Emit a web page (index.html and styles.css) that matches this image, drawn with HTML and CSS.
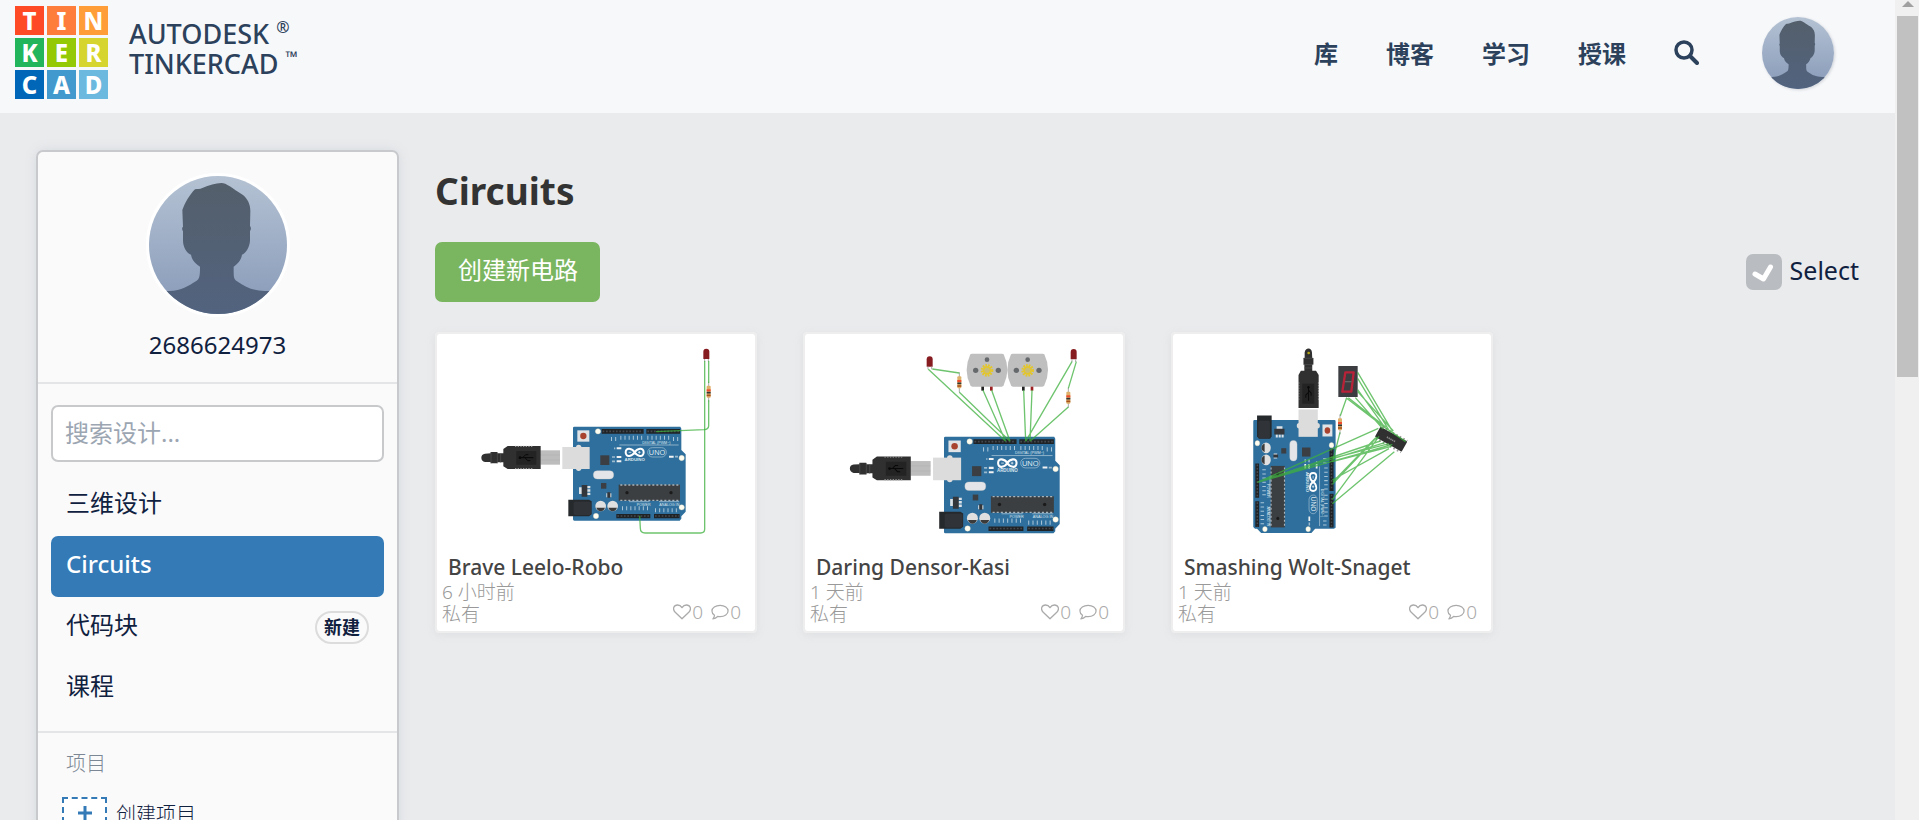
FILE: index.html
```html
<!DOCTYPE html>
<html lang="zh-CN">
<head>
<meta charset="utf-8">
<title>Tinkercad</title>
<link rel="stylesheet" href="styles.css">
</head>
<body>
<svg class="defs" aria-hidden="true">
  <defs>
    <linearGradient id="sky" x1="0" y1="0" x2="0" y2="1"><stop offset="0" stop-color="#b4c2d3"/><stop offset="1" stop-color="#8799b8"/></linearGradient>
    <linearGradient id="person" x1="0" y1="0" x2="0" y2="1"><stop offset="0" stop-color="#545f6b"/><stop offset="1" stop-color="#52637f"/></linearGradient>
    <symbol id="avatar" viewBox="387 108 414 414">
      <rect x="387" y="108" width="414" height="414" fill="url(#sky)"/>
      <path fill="url(#person)" d="M387 453h60c40-2 55-14 83-31 8-6 10-12 10-42-10-8-24-16-27-36-12-4-24-22-24-42v-28c-4-6-3-12 0-14l-2-50c8-22 22-46 38-62 8-2 14 0 22-4 20-8 40-15 57-15 16 0 30 14 66 37 14 12 22 30 21 50l-1 42c4 4 3 12 0 14v30c-1 18-12 38-24 42-3 18-14 28-25 36 0 34 0 36 10 44 26 18 45 27 82 29h68v69H387z"/>
    </symbol>
    <symbol id="heart" viewBox="0 0 18 16"><path d="M9 14.8 2.2 8.2C-1 4.800 1 1 4.600 1 6.800 1 8.200 2.400 9 3.600 9.800 2.400 11.200 1 13.400 1 17 1 19 4.800 15.800 8.200z" fill="none" stroke="currentColor" stroke-width="1.300" stroke-linejoin="round"/></symbol>
    <symbol id="bubble" viewBox="0 0 19 16"><path d="M9.600 1C14.500 1 18 3.700 18 7s-3.500 6-8.400 6c-1 0-1.800-.1-2.600-.3C5.700 14 4 15 2 15.300c1-1 1.600-2.300 1.700-3.800C2 10.400 1 8.800 1 7c0-3.300 3.700-6 8.600-6z" fill="none" stroke="currentColor" stroke-width="1.300" stroke-linejoin="round"/></symbol>

    <g id="plug">
      <path fill="#303030" d="M180 386q-11 2-11 12t11 13h17v4h20v-3h18v12l13 8h99v-69h-99l-13 9v13h-18v-4h-20v4z"/>
      <path d="M198 382v33M217 382v33M227 386v27" stroke="#555" stroke-width="2"/>
      <path d="M270 364h56M270 431h56" stroke="#aaa" stroke-width="3" stroke-dasharray="4 4"/>
      <rect x="274" y="378" width="60" height="41" fill="#232323"/>
      <path d="M283 398h42M293 398l9-9h8M300 398l8 9h8" stroke="#090909" stroke-width="3" fill="none"/>
      <circle cx="285" cy="398" r="4" fill="#090909"/>
    </g>
    <g id="board">
      <path fill="#2f6f9d" d="M444 309q0-4 4-4h318l3 6v64l13 13v172l-13 14v7l-5 6H448q-4 0-4-4z"/>
      <rect x="457" y="316" width="36" height="34" fill="#dfe3e6"/><circle cx="475" cy="333" r="9.500" fill="#a8432f"/>
      <circle cx="461" cy="367" r="8" fill="#ddd"/><circle cx="461" cy="430" r="8" fill="#ddd"/>
      <rect x="412" y="366" width="82" height="66" fill="#dcdcdc"/>
      <rect x="526" y="391" width="27" height="29" fill="#3b3e42"/>
      <rect x="505" y="437" width="61" height="25" rx="12" fill="#e3e5e8" stroke="#c8c8c8"/>
      <rect x="528" y="474" width="16" height="17" fill="#3b3e42"/>
      <path d="M462 487h9v20h-9zM486 483h10v7h-10zM486 493h10v7h-10zM486 503h10v7h-10zM544 505h4v12h-4zM555 505h4v12h-4z" fill="#dce3e8"/>
      <path d="M470 480h17v35h-17zM547 502h9v16h-9z" fill="#33363a"/>
      <path d="M430 524h62l8 5v39l-8 6h-62z" fill="#26292c"/><rect x="446" y="530" width="52" height="40" rx="5" fill="#303438"/>
      <circle cx="527" cy="543" r="16" fill="#e0e0e0"/><path d="M514 548h26q-4 11-13 11t-13-11z" fill="#3b3b3b"/>
      <circle cx="563" cy="543" r="16" fill="#e0e0e0"/><path d="M550 548h26q-4 11-13 11t-13-11z" fill="#3b3b3b"/>
      <path d="M530 312h126v14H530zM664 312h101v14H664zM574 567h102v13H574zM687 567h77v13h-77z" fill="#202326"/>
      <path d="M533 319h120M667 319h96M577 573h96M690 573h72" stroke="#45494d" stroke-width="5" stroke-dasharray="5 5"/>
      <rect x="581" y="479" width="184" height="48" fill="#3c3f42"/>
      <path d="M586 480h176M586 526h176" stroke="#a9b4bb" stroke-width="4" stroke-dasharray="6 6"/>
      <circle cx="606" cy="503" r="5" fill="#1b1b1b"/><circle cx="738" cy="503" r="5" fill="#1b1b1b"/>
      <g fill="#fffdf0" stroke="#d8d4bc"><circle cx="519" cy="319" r="8"/><circle cx="770" cy="399" r="8"/><circle cx="770" cy="547" r="8"/><circle cx="513" cy="573" r="8"/></g>
      <path d="M558 342h24M586 338h68M667 338h68M744 342h18M591 550h84M690 556h72" stroke="#a9c5d7" stroke-width="12" stroke-dasharray="3 9.500"/>
      <path d="M583 360h178M612 530h62M702 530h60" stroke="#b9d0de" stroke-width="2"/>
      <path d="M575 370h14M575 396h14M575 409h14M732 395h14" stroke="#f0f2f3" stroke-width="6"/>
      <path d="M561 396h9M561 409h9M567 370h4M750 395h9" stroke="#9dbbcf" stroke-width="5"/>
      <path d="M629 382c-7-12-27-17-27 0s20 12 27 0 27-17 27 0-20 12-27 0z" fill="none" stroke="#fff" stroke-width="6"/>
      <path d="M611 382h8M639 382h8M643 378v8" stroke="#fff" stroke-width="2"/>
      <rect x="668" y="368" width="56" height="28" rx="14" fill="none" stroke="#a9c5d7" stroke-width="2"/>
    </g>
    <g id="labels" class="silk">
      <text x="629" y="409" font-size="13" font-weight="700" text-anchor="middle">ARDUINO</text>
      <text x="696" y="390" font-size="22" text-anchor="middle">UNO</text>
      <text x="694" y="356" font-size="11" text-anchor="middle">DIGITAL (PWM~)</text>
      <text x="656" y="542" font-size="11" text-anchor="middle">POWER</text>
      <text x="733" y="542" font-size="11" text-anchor="middle">ANALOG IN</text>
    </g>
    <g id="led"><path d="M-9 31V9q0-9 9-9t9 9v22z" fill="#861b20"/><path d="M-5 31v8M6 31v8" stroke="#aaa" stroke-width="3"/></g>
    <g id="resistor"><path d="M0-30v60" stroke="#aaa" stroke-width="3"/><rect x="-6" y="-18" width="12" height="36" rx="3" fill="#deb06a"/><path d="M-6-4H6" stroke="#ef4b2c" stroke-width="6"/><path d="M-6 3H6" stroke="#333" stroke-width="5"/><path d="M-6 11H6" stroke="#a8521e" stroke-width="5"/></g>
    <g id="motor">
      <path d="M-50-48q2-2 5-2h90q3 0 5 2 22 46 0 93-2 4-6 4h-88q-4 0-6-4-22-46 0-93z" fill="#bfbfbf"/>
      <circle r="15" fill="none" stroke="#e3c62d" stroke-width="8" stroke-dasharray="5 3"/><circle r="13" fill="#e3c62d"/><circle r="8" fill="#c9bd78"/>
      <g fill="#66696c"><circle cx="0" cy="-32" r="7"/><circle cx="-34" cy="0" r="8"/><circle cx="34" cy="0" r="8"/></g>
      <path d="M-13 49v12" stroke="#222" stroke-width="8"/><path d="M13 49v12" stroke="#9c2022" stroke-width="8"/>
    </g>
  </defs>
</svg>

<div class="window">
  <div class="page">
    <header class="topbar">
      <a class="brand" href="#">
        <span class="tiles" aria-hidden="true">
          <span class="tile red">T</span><span class="tile coral">I</span><span class="tile orange">N</span>
          <span class="tile green">K</span><span class="tile lime">E</span><span class="tile yellow">R</span>
          <span class="tile navy">C</span><span class="tile blue">A</span><span class="tile sky">D</span>
        </span>
        <span class="wordmark">
          <span class="word">AUTODESK <sup>®</sup></span>
          <span class="word">TINKERCAD <sup>™</sup></span>
        </span>
      </a>
      <nav class="nav">
        <a href="#">库</a>
        <a href="#">博客</a>
        <a href="#">学习</a>
        <a href="#">授课</a>
        <button class="search" type="button" aria-label="搜索"><svg viewBox="0 0 25 25"><circle cx="10" cy="10" r="8" fill="none" stroke="currentColor" stroke-width="3.500"/><path d="m16 16 7 7" stroke="currentColor" stroke-width="4" stroke-linecap="round"/></svg></button>
        <a class="account" href="#" aria-label="账户"><svg><use href="#avatar"/></svg></a>
      </nav>
    </header>

    <div class="workspace">
      <aside class="sidebar">
        <section class="profile">
          <a class="portrait" href="#" aria-label="个人资料"><svg><use href="#avatar"/></svg></a>
          <a class="username" href="#">2686624973</a>
        </section>
        <section class="designs">
          <input class="filter" type="search" placeholder="搜索设计..." aria-label="搜索设计">
          <nav class="menu">
            <a href="#">三维设计</a>
            <a class="current" href="#">Circuits</a>
            <a href="#">代码块 <span class="badge">新建</span></a>
            <a href="#">课程</a>
          </nav>
        </section>
        <section class="projects">
          <h2>项目</h2>
          <button class="add" type="button"><span class="plus"><svg viewBox="0 0 14 14"><path d="M7 0v14M0 7h14" stroke="currentColor" stroke-width="3"/></svg></span>创建项目</button>
        </section>
      </aside>

      <main class="main">
        <h1>Circuits</h1>
        <div class="toolbar">
          <button class="create" type="button">创建新电路</button>
          <button class="select" type="button"><svg viewBox="0 0 36 36"><rect width="36" height="36" rx="7" fill="#b9bcc1"/><path d="m9 20 8.500 5 7-12" fill="none" stroke="#fff" stroke-width="5" stroke-linecap="round" stroke-linejoin="round"/></svg><span>Select</span></button>
        </div>

        <div class="cards">
          <article class="card">
            <svg class="thumb" viewBox="36 27 954 660">
              <rect x="346" y="376" width="59" height="43" fill="#bdbdbd"/><path d="M346 390h59M346 405h59" stroke="#a9a9a9"/>
              <use href="#plug"/><use href="#board"/><use href="#labels"/>
              <use href="#led" x="844" y="71"/>
              <use href="#resistor" x="851" y="200"/>
              <g class="wire"><path d="M839 108v505q0 11-12 11H660q-14 0-14-14l-2-38"/><path d="M851 108v66M851 226v76q0 11-14 12l-144 6"/></g>
            </svg>
            <h3>Brave Leelo-Robo</h3>
            <div class="meta"><p>6 小时前<br>私有</p><p class="stats"><svg class="heart"><use href="#heart"/></svg>0<svg class="bubble"><use href="#bubble"/></svg>0</p></div>
          </article>

          <article class="card">
            <svg class="thumb" viewBox="42 27 954 660">
              <g transform="translate(3 22) scale(1.027)">
                <rect x="346" y="376" width="59" height="43" fill="#bdbdbd"/><path d="M346 390h59M346 405h59" stroke="#a9a9a9"/>
                <use href="#plug"/><use href="#board"/><use href="#labels"/>
              </g>
              <use href="#motor" x="588" y="136"/><use href="#motor" x="710" y="136"/>
              <use href="#led" x="416" y="94"/><use href="#led" x="848" y="72"/>
              <use href="#resistor" x="505" y="172"/><use href="#resistor" x="832" y="218"/>
              <g class="wire"><path d="M412 133l232 216M424 132l81 12M505 202l152 147M576 196l68 153M602 196l55 153M698 196l6 153M723 196l-6 153M843 110L704 349M856 110l-24 80M832 246L717 349"/></g>
            </svg>
            <h3>Daring Densor-Kasi</h3>
            <div class="meta"><p>1 天前<br>私有</p><p class="stats"><svg class="heart"><use href="#heart"/></svg>0<svg class="bubble"><use href="#bubble"/></svg>0</p></div>
          </article>

          <article class="card">
            <svg class="thumb" viewBox="36 27 954 660">
              <g transform="matrix(0 1.003 -.876 0 791 -160)">
                <use href="#plug" x="61"/><use href="#board"/>
              </g>
              <circle cx="443" cy="84" r="4" fill="#b5a512"/>
              <g class="silk">
                <text transform="translate(434 471) rotate(90)" font-size="13" font-weight="700" text-anchor="middle">ARDUINO</text>
                <text transform="translate(450 537) rotate(90)" font-size="20" text-anchor="middle">UNO</text>
                <text transform="translate(480 534) rotate(90)" font-size="11" text-anchor="middle">DIGITAL (PWM~)</text>
                <text transform="translate(318 498) rotate(90)" font-size="11" text-anchor="middle">POWER</text>
                <text transform="translate(318 574) rotate(90)" font-size="11" text-anchor="middle">ANALOG IN</text>
              </g>
              <use href="#resistor" x="537" y="298"/>
              <rect x="532" y="123" width="58" height="93" fill="#3b3d40"/>
              <path d="M553 142h25l-7 58h-27z" fill="none" stroke="#b82238" stroke-width="7" stroke-linejoin="round"/><path d="M552 170h20" stroke="#666" stroke-width="4"/>
              <g transform="translate(690 343) rotate(29)"><path d="M-41-20h86M-41 20h86" stroke="#999" stroke-width="5" stroke-dasharray="5 7"/><rect x="-46" y="-18" width="92" height="35" rx="3" fill="#303030"/><path d="M-14 0h28" stroke="#888" stroke-width="5" stroke-dasharray="4 2"/></g>
              <g class="wire"><path d="M557 218l-19 54M537 322l-22 88M590 142l105 178M590 160l94 156M590 194l82 114M590 200l107 118M583 218l83 94M555 218l117 90M562 218l112 88M672 308l62 42"/>
              <path d="M289 472L652 310M289 472l369-124M289 472l382-119M289 472l396-111M514 400l170-44M514 410l178-46M514 410l180-52M514 465l170-94M514 478L648 336M514 524l140-190M514 536l186-156M516 470l128-132"/></g>
            </svg>
            <h3>Smashing Wolt-Snaget</h3>
            <div class="meta"><p>1 天前<br>私有</p><p class="stats"><svg class="heart"><use href="#heart"/></svg>0<svg class="bubble"><use href="#bubble"/></svg>0</p></div>
          </article>
        </div>
      </main>
    </div>
  </div>
  <div class="scrollbar" aria-hidden="true"><span class="arrow"></span><span class="thumb-bar"></span></div>
</div>
</body>
</html>
```

FILE: styles.css
```css
* { box-sizing: border-box; }

body {
  margin: 0;
  background: #eaebed;
  color: #10213f;
  font: 24px/36px "Noto Sans", "Noto Sans CJK SC", sans-serif;
}

h1, h2, h3, p { margin: 0; }
a { color: inherit; text-decoration: none; }
button { border: 0; padding: 0; background: none; color: inherit; font: inherit; cursor: pointer; }
svg { display: block; }
.defs { position: absolute; width: 0; height: 0; }

.window { display: flex; height: 100vh; overflow: hidden; }
.page { flex: 1; min-width: 0; overflow: hidden; }

.scrollbar { width: 24px; padding: 1px 1px 0 2px; background: #f0f0f0; }
.arrow { display: block; margin: 0 5px 9px; border: 6px solid transparent; border-top: 0; border-bottom-color: #a0a0a0; }
.thumb-bar { display: block; height: 44vh; background: #c1c1c1; }

/* Header */
.topbar {
  display: flex;
  align-items: center;
  justify-content: space-between;
  padding: 6px 61px 14px 15px;
  background: #f7f8fa;
  color: #2c415b;
}
.brand { display: flex; align-items: center; gap: 21px; }
.tiles { display: grid; grid-template-columns: repeat(3, 29px); gap: 3px; }
.tile { color: #fff; font-weight: 800; font-size: 24px; line-height: 29px; text-align: center; }
.red { background: #ff4a26; }
.coral { background: #ff7d3b; }
.orange { background: #ff9e39; }
.green { background: #22b55c; }
.lime { background: #93ca05; }
.yellow { background: #d6d42e; }
.navy { background: #0067b8; }
.blue { background: #4299cd; }
.sky { background: #6cb9df; }
.wordmark { display: flex; flex-direction: column; padding-bottom: 7px; }
.word { font-size: 27px; line-height: 30px; font-weight: 500; }
.word sup { font-size: 16px; line-height: 0; vertical-align: 11px; }

.nav { display: flex; align-items: center; gap: 48px; font-weight: 700; }
.nav > a { padding-top: 3px; }
.search svg { width: 25px; height: 25px; }
.nav > .account { margin-left: 15px; padding: 0; border-radius: 50%; overflow: hidden; box-shadow: 1px 1px 3px #cfd3d8; }
.account svg { width: 72px; height: 72px; }

/* Layout */
.workspace { display: flex; gap: 36px; padding: 37px 36px 0; }

/* Sidebar */
.sidebar {
  flex: 0 0 363px;
  border: 2px solid #c8c9cd;
  border-radius: 7px;
  background: #fafafa;
  box-shadow: 0 0 12px #d5dade;
}
.profile { display: flex; flex-direction: column; align-items: center; gap: 10px; padding: 21px 0 19px; border-bottom: 2px solid #e4e5e6; }
.portrait { border: 3px solid #fff; border-radius: 50%; overflow: hidden; }
.portrait svg { width: 138px; height: 138px; }
.designs { padding: 21px 13px 12px; border-bottom: 2px solid #e4e5e6; }
.filter {
  display: block;
  width: 100%;
  height: 57px;
  padding: 0 12px 2px;
  border: 2px solid #c8c9cb;
  border-radius: 7px;
  background: #fff;
  font: inherit;
  appearance: none;
}
.filter::placeholder { color: #9ca6b2; opacity: 1; }
.menu { padding-top: 13px; }
.menu a { display: flex; align-items: center; justify-content: space-between; height: 61px; padding: 0 15px 5px; border-radius: 7px; }
.menu .current { background: #337ab7; color: #fff; font-weight: 500; }
.badge { margin-top: 4px; padding: 0 7px; border: 2px solid #dcdcdc; border-radius: 17px; font-size: 18px; line-height: 29px; font-weight: 700; }
.projects { padding: 16px 24px; }
.projects h2 { padding-left: 4px; color: #7b8794; font-size: 20px; line-height: 30px; font-weight: 300; }
.add { display: flex; align-items: center; gap: 9px; margin-top: 17px; font-size: 20px; line-height: 38px; font-weight: 300; }
.plus { display: grid; place-items: center; width: 45px; height: 36px; border: 2px dashed #337ab7; background: #fff; color: #337ab7; }
.plus svg { width: 14px; height: 14px; margin-bottom: 4px; }

/* Main */
.main { flex: 1; min-width: 0; padding-top: 16px; }
h1 { color: #333; font-size: 37px; line-height: 50px; font-weight: 700; }
.toolbar { display: flex; align-items: center; justify-content: space-between; margin: 26px 0 30px; }
.create { height: 60px; padding: 0 22px 5px 23px; border-radius: 7px; background: #7ab55f; color: #fff; }
.select { display: flex; align-items: center; gap: 8px; }
.select svg { width: 36px; height: 36px; }
.select span { padding-bottom: 4px; font-size: 25px; line-height: 32px; }

.cards { display: grid; grid-template-columns: repeat(auto-fill, 322px); gap: 46px; }
.card { border: 2px solid #eee; border-radius: 4px; background: #fff; background-clip: padding-box; box-shadow: 0 2px 8px #dddfe1; }
.thumb { width: 100%; }
.silk { fill: #dbe7ef; font-family: "Liberation Sans", sans-serif; }
.wire { fill: none; stroke: #3eb03e; stroke-width: 4; stroke-opacity: .75; stroke-linejoin: round; }
h3 { padding: 0 11px; color: #444; font-size: 21px; line-height: 26px; font-weight: 500; }
.meta { display: flex; align-items: flex-end; justify-content: space-between; padding: 1px 14px 6px 5px; color: #999; font-size: 19px; line-height: 22px; font-weight: 300; }
.stats { display: flex; align-items: center; padding-bottom: 2px; color: #aaa; }
.heart { width: 18px; height: 16px; margin-right: 1px; }
.bubble { width: 18px; height: 16px; margin: 0 1px 0 8px; }
```
